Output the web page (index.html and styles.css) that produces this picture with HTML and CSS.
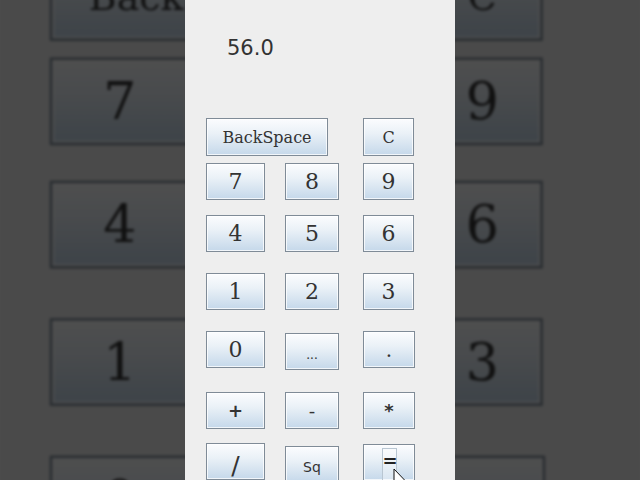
FILE: index.html
```html
<!DOCTYPE html>
<html lang="en">
<head>
<meta charset="utf-8">
<title>Calculator</title>
<link rel="stylesheet" href="styles.css">
</head>
<body>
<div class="stage">
  <div class="backdrop" aria-hidden="true">
    <div class="calc">
      <div class="display">56.0</div>
      <div class="keys">
        <div class="row r0"><button class="key w-back">BackSpace</button><button class="key w-c small">C</button></div>
        <div class="row r1"><button class="key c1">7</button><button class="key c2">8</button><button class="key c3">9</button></div>
        <div class="row r2"><button class="key c1">4</button><button class="key c2">5</button><button class="key c3">6</button></div>
        <div class="row r3"><button class="key c1">1</button><button class="key c2">2</button><button class="key c3">3</button></div>
        <div class="row r4"><button class="key c1">0</button><button class="key c2 dn2 dots">...</button><button class="key c3w dot">.</button></div>
        <div class="row r5"><button class="key c1 op bold">+</button><button class="key c2 op">-</button><button class="key c3w op bold">*</button></div>
        <div class="row r6"><button class="key c1 op slash">/</button><button class="key c2 dn3 op sq">Sq</button><button class="key c3w dn1 op bold">=</button></div>
      </div>
    </div>
  </div>
  <div class="front">
    <div class="calc">
      <div class="display">56.0</div>
      <div class="keys">
        <div class="row r0"><button class="key w-back">BackSpace</button><button class="key w-c small">C</button></div>
        <div class="row r1"><button class="key c1">7</button><button class="key c2">8</button><button class="key c3">9</button></div>
        <div class="row r2"><button class="key c1">4</button><button class="key c2">5</button><button class="key c3">6</button></div>
        <div class="row r3"><button class="key c1">1</button><button class="key c2">2</button><button class="key c3">3</button></div>
        <div class="row r4"><button class="key c1">0</button><button class="key c2 dn2 dots">...</button><button class="key c3w dot">.</button></div>
        <div class="row r5"><button class="key c1 op bold">+</button><button class="key c2 op">-</button><button class="key c3w op bold">*</button></div>
        <div class="row r6"><button class="key c1 op slash">/</button><button class="key c2 dn3 op sq">Sq</button><button class="key c3w dn1 op bold eq"><span class="focus">=</span><svg class="cursor" width="14" height="22" viewBox="0 0 14 22"><path d="M1 1 L1 17 L4.5 13.5 L7.5 20 L10 19 L7 12.5 L12 12.5 Z" fill="#fff" stroke="#111" stroke-width="1" stroke-linejoin="round"/></svg></button></div>
      </div>
    </div>
  </div>
</div>
</body>
</html>
```
FILE: styles.css
```css
html, body {
  margin: 0;
  padding: 0;
  background: #4b4b4b;
}

.stage {
  width: 640px;
  height: 480px;
  display: grid;
  overflow: hidden;
  background: #4b4b4b;
}

.backdrop, .front {
  grid-area: 1 / 1;
  justify-self: center;
  align-self: start;
}

.backdrop {
  transform: scale(2.37);
  transform-origin: 50% 50%;
  filter: brightness(0.31) blur(0.6px);
}

.front {
  position: relative;
}

.calc {
  box-sizing: border-box;
  width: 270px;
  height: 480px;
  background: #eeeeee;
  padding: 36px 0 0 21px;
}

.display {
  height: 24px;
  line-height: 24px;
  padding-left: 21px;
  font-family: "DejaVu Sans", sans-serif;
  font-size: 21px;
  color: #333;
}

.keys {
  margin-top: 58px;
  display: flex;
  flex-direction: column;
}

.row {
  display: flex;
  align-items: flex-start;
  height: 37px;
}

.r0 { height: 38px; }
.r1 { margin-top: 7px; }
.r2 { margin-top: 15px; }
.r3 { margin-top: 21px; }
.r4 { margin-top: 21px; height: 40px; }
.r5 { margin-top: 21px; }
.r6 { margin-top: 14px; height: 40px; }

.key {
  box-sizing: border-box;
  margin: 0;
  padding: 0;
  height: 37px;
  border: 1px solid #7f8b97;
  background: linear-gradient(#fbfcfe 0%, #eaf1f7 40%, #c5d8ea 100%);
  box-shadow: inset 0 0 0 1px rgba(255, 255, 255, 0.75);
  display: flex;
  align-items: center;
  justify-content: center;
  font-family: "DejaVu Serif", serif;
  font-size: 22px;
  color: #333;
  flex: none;
}

.r0 .key { height: 38px; }

.w-back { width: 122px; font-size: 16px; }
.w-c { width: 51px; margin-left: 35px; }
.small { font-size: 16px; }

.c1 { width: 59px; }
.c2 { width: 54px; margin-left: 20px; }
.c3 { width: 51px; margin-left: 24px; }
.c3w { width: 52px; margin-left: 24px; }

.dn1 { margin-top: 1px; }
.dn2 { margin-top: 2px; }
.dn3 { margin-top: 3px; }

.dots { font-size: 12px; padding-top: 6px; }
.dot { font-size: 20px; }

.op {
  font-family: "DejaVu Sans", sans-serif;
  font-size: 18px;
}
.bold { font-weight: bold; }
.slash { font-size: 25px; padding-top: 8px; }
.sq { font-size: 14px; padding-top: 4px; }

.eq {
  position: relative;
  align-items: flex-start;
}

.focus {
  display: block;
  margin-top: 3px;
  width: 15px;
  height: 40px;
  box-sizing: border-box;
  border: 1px solid #b9c6d2;
  background: rgba(255, 255, 255, 0.35);
  line-height: 24px;
  text-align: center;
  font-size: 18px;
  color: #222;
}

.cursor {
  position: absolute;
  left: 29px;
  top: 23px;
}
```
